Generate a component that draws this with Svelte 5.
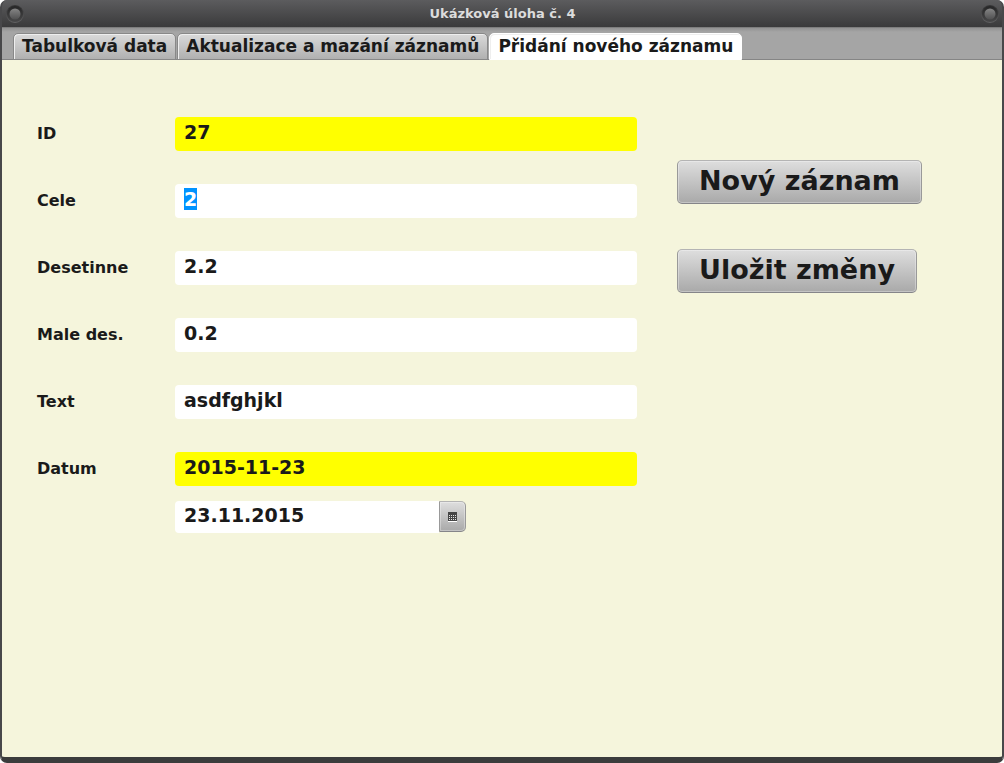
<script lang="ts">
	const tabs = ["Tabulková data", "Aktualizace a mazání záznamů", "Přidání nového záznamu"];

	const fields = $state([
		{ id: "id", label: "ID", value: "27", locked: true },
		{ id: "cele", label: "Cele", value: "2", locked: false },
		{ id: "desetinne", label: "Desetinne", value: "2.2", locked: false },
		{ id: "male", label: "Male des.", value: "0.2", locked: false },
		{ id: "text", label: "Text", value: "asdfghjkl", locked: false },
		{ id: "datum", label: "Datum", value: "2015-11-23", locked: true }
	]);

	let active = $state(2);
	let picked = $state("23.11.2015");
	let form: HTMLFormElement;

	// put the cursor in the first editable field
	$effect(() => {
		const first = form.querySelector<HTMLInputElement>("input:not([readonly])");
		first?.focus();
		first?.select();
	});

	function clear() {
		for (const field of fields) {
			if (!field.locked) field.value = "";
		}
	}
</script>

{#snippet knob()}
	<svg width="20" height="20" viewBox="0 0 20 20" aria-hidden="true">
		<defs>
			<linearGradient id="ring" x2="0" y2="1">
				<stop offset="0" stop-color="#333334" />
				<stop offset="1" stop-color="#626263" />
			</linearGradient>
			<linearGradient id="well" x2="0" y2="1">
				<stop offset="0" stop-color="#262627" />
				<stop offset="1" stop-color="#484849" />
			</linearGradient>
			<linearGradient id="ball" x2="0" y2="1">
				<stop offset="0" stop-color="#858585" />
				<stop offset="1" stop-color="#505051" />
			</linearGradient>
		</defs>
		<circle cx="10" cy="10" r="9" fill="url(#ring)" />
		<circle cx="10" cy="10" r="8" fill="url(#well)" />
		<circle cx="10" cy="10" r="5.5" fill="url(#ball)" />
	</svg>
{/snippet}

<div class="window">
	<header>
		<button class="knob" aria-label="Nabídka okna">{@render knob()}</button>
		<h1>Ukázková úloha č. 4</h1>
		<button class="knob" aria-label="Zavřít">{@render knob()}</button>
	</header>

	<div class="tabs" role="tablist">
		{#each tabs as tab, i}
			<button role="tab" aria-selected={active === i} onclick={() => (active = i)}>{tab}</button>
		{/each}
	</div>

	<main>
		<form bind:this={form} id="record" onsubmit={(e) => e.preventDefault()}>
			{#each fields as field}
				<div class="row">
					<label for={field.id}>{field.label}</label>
					<input
						id={field.id}
						class:locked={field.locked}
						readonly={field.locked}
						autocomplete="off"
						bind:value={field.value}
					/>
				</div>
			{/each}
			<div class="picker">
				<input aria-label="Výběr data" autocomplete="off" bind:value={picked} />
				<button type="button" aria-label="Otevřít kalendář">
					<svg width="9" height="11" viewBox="0 -1 9 11" shape-rendering="crispEdges">
						<path fill="#464646" d="M0 0h9v9H0z" />
						<path fill="#fff" d="M0 9h9v1H0z" />
						<path
							stroke="#e4e4e4"
							stroke-dasharray="1 1"
							d="M1 3.5h7M1 5.5h7M1 7.5h7"
						/>
					</svg>
				</button>
			</div>
		</form>

		<div class="actions">
			<button type="button" onclick={clear}>Nový záznam</button>
			<button type="submit" form="record">Uložit změny</button>
		</div>
	</main>
</div>

<style>
	:global(body) {
		margin: 0;
		background: #fff;
	}

	.window {
		--text: #1a1a1a;
		--sand: #f5f5dc;

		display: flex;
		flex-direction: column;
		box-sizing: border-box;
		min-height: 100vh;
		border: 2px solid #48484a;
		border-top: none;
		border-bottom: 6px solid #3b3c3c;
		border-radius: 7px;
		overflow: hidden;
		background: #48484a;
		color: var(--text);
		font-family: "DejaVu Sans", Verdana, sans-serif;
		font-weight: bold;
	}

	button,
	input {
		margin: 0;
		border: none;
		color: inherit;
		font: inherit;
		outline: none;
	}

	header {
		display: flex;
		align-items: center;
		justify-content: space-between;
		box-sizing: border-box;
		height: 27px;
		padding: 0 2px 0 3px;
		background: linear-gradient(#5c5c5e, #3a3a3b);

		& h1 {
			margin: 0;
			color: #dcdcdc;
			font-size: 13px;
			line-height: 16px;
		}
	}

	.knob {
		display: flex;
		padding: 0;
		background: none;
	}

	.tabs {
		display: flex;
		align-items: flex-end;
		gap: 1px;
		box-sizing: border-box;
		height: 33px;
		padding: 0 11px;
		border-top: 1px solid #7e7e7e;
		background: linear-gradient(#929292, #a5a5a5 4px);
		box-shadow: inset 0 -1px #858585;

		& button {
			height: 27px;
			padding: 0 8px 2px;
			border: 1px solid #888;
			border-radius: 5px 5px 0 0;
			background: linear-gradient(#dadada, #b0b0b0);
			box-shadow: inset 1px 1px #eee;
			font-size: 17px;
			line-height: 20px;
			white-space: nowrap;

			&[aria-selected="true"] {
				border-color: #fff;
				background: #fff;
			}
		}
	}

	main {
		display: flex;
		flex: 1;
		align-items: flex-start;
		gap: 40px;
		padding: 57px 80px 57px 35px;
		background: var(--sand);
	}

	form {
		display: flex;
		flex: 0 1 600px;
		flex-direction: column;
		gap: 33px;
	}

	.row {
		display: flex;
		align-items: center;

		& label {
			flex: 0 0 138px;
			font-size: 16px;
			line-height: 20px;
		}

		& input {
			flex: 1;
		}
	}

	input {
		box-sizing: border-box;
		min-width: 0;
		height: 34px;
		padding: 0 9px 4px;
		border-radius: 4px;
		background: #fff;
		font-size: 19px;

		&.locked {
			background: #ff0;
		}

		&::selection {
			background: #0093ff;
			color: #fff;
		}
	}

	.picker {
		display: flex;
		margin: -18px 0 0 138px;

		& input {
			width: 264px;
			height: 32px;
			border-radius: 4px 0 0 4px;
		}

		& button {
			display: flex;
			align-items: center;
			justify-content: center;
			width: 27px;
			height: 31px;
			padding: 0;
			border-radius: 0 5px 5px 0;
		}
	}

	.picker button,
	.actions button {
		border: 1px solid #999;
		border-top-color: #b4b4b4;
		border-bottom-color: #858589;
		background: linear-gradient(#dedede, #a9a9a9);
		box-shadow: inset 0 0 0 1px #ffffff50;
	}

	.actions {
		display: flex;
		flex-direction: column;
		align-items: flex-start;
		gap: 45px;
		margin-top: 43px;

		& button {
			height: 44px;
			padding: 0 21px 3px;
			border-radius: 5px;
			font-size: 27px;
			white-space: nowrap;
		}
	}
</style>
